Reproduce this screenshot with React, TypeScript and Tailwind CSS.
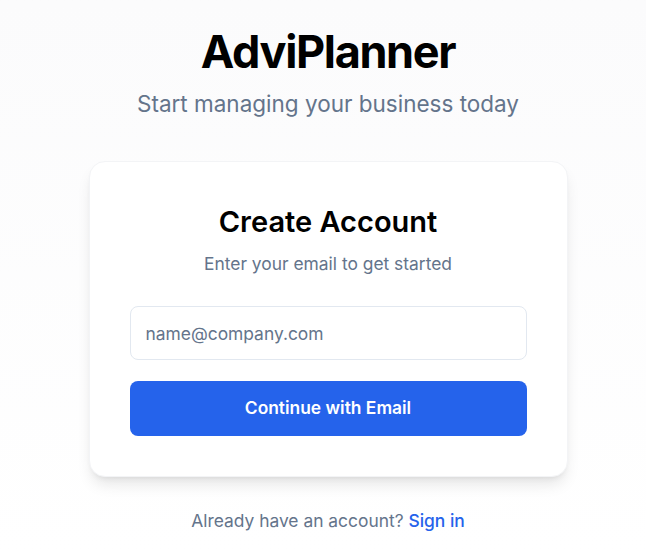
import React, { useState } from 'react';

const App = () => {
  const [email, setEmail] = useState('');

  return (
    <div className="min-h-screen bg-gradient-to-b from-[#fbfbfc] to-white font-['Inter',sans-serif] pl-[10px]">
      <div className="flex flex-col items-center pt-[26px]">
        <h1 className="text-[45px] leading-[52px] font-bold tracking-[-0.03em] text-black">AdviPlanner</h1>
        <p className="mt-[12px] text-[22.5px] leading-[28px] text-[#64748b]">Start managing your business today</p>

        <div className="mt-[43px] w-[479px] rounded-2xl border border-gray-100 bg-white px-10 pt-[42px] pb-10 shadow-lg">
          <div className="text-center">
            <h2 className="text-[29px] leading-[36px] font-semibold text-black">Create Account</h2>
            <p className="mt-[11px] text-[17.4px] leading-[26px] text-[#64748b]">Enter your email to get started</p>
          </div>
          <form className="mt-[29px] flex flex-col gap-[21px]" onSubmit={(e) => e.preventDefault()}>
            <input
              type="email"
              value={email}
              onChange={(e) => setEmail(e.target.value)}
              placeholder="name@company.com"
              className="h-[54px] w-full rounded-lg border border-slate-200 px-[15px] text-[17.4px] text-slate-900 placeholder:text-[#64748b] outline-none"
            />
            <button
              type="submit"
              className="h-[55px] w-full rounded-lg bg-[#2563eb] text-[17.4px] font-semibold text-white"
            >
              Continue with Email
            </button>
          </form>
        </div>

        <p className="mt-[31px] text-[17.4px] text-[#64748b]">
          Already have an account? <a href="#" className="font-medium text-[#2563eb]">Sign in</a>
        </p>
      </div>
    </div>
  );
};

export default App;
